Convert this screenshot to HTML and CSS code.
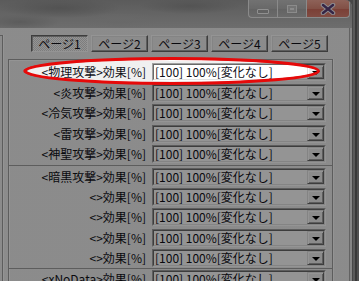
FILE: index.html
```html
<!DOCTYPE html>
<html lang="ja">
<head>
<meta charset="utf-8">
<link rel="stylesheet" href="styles.css">
</head>
<body>
<div class="window">
  <div class="titlebar">
    <div class="controls">
      <div class="cbtn min"><span class="g-min"></span></div>
      <div class="cbtn max"><span class="g-max"></span></div>
      <div class="cbtn close">
        <svg width="16" height="12" viewBox="0 0 16 12">
          <path d="M3 2 L13 10 M13 2 L3 10" stroke="#f4f0f8" stroke-width="4.5" stroke-linecap="round"/>
          <path d="M3 2 L13 10 M13 2 L3 10" stroke="#5a3f78" stroke-width="2.4" stroke-linecap="round"/>
        </svg>
      </div>
    </div>
  </div>
  <div class="client">
    <div class="leftpane"></div>
    <div class="main">
      <div class="tabs">
        <div class="tab pressed">ページ1</div>
        <div class="tab">ページ2</div>
        <div class="tab">ページ3</div>
        <div class="tab">ページ4</div>
        <div class="tab">ページ5</div>
      </div>
      <div class="group">
        <div class="section s1">
          <div class="row"><div class="label">&lt;物理攻撃&gt;効果[%]</div><div class="select"><div class="inner"><span class="val">[100] 100%[変化なし]</span><span class="drop"><i></i></span></div></div></div>
          <div class="row"><div class="label">&lt;炎攻撃&gt;効果[%]</div><div class="select"><div class="inner"><span class="val">[100] 100%[変化なし]</span><span class="drop"><i></i></span></div></div></div>
          <div class="row"><div class="label">&lt;冷気攻撃&gt;効果[%]</div><div class="select"><div class="inner"><span class="val">[100] 100%[変化なし]</span><span class="drop"><i></i></span></div></div></div>
          <div class="row"><div class="label">&lt;雷攻撃&gt;効果[%]</div><div class="select"><div class="inner"><span class="val">[100] 100%[変化なし]</span><span class="drop"><i></i></span></div></div></div>
          <div class="row"><div class="label">&lt;神聖攻撃&gt;効果[%]</div><div class="select"><div class="inner"><span class="val">[100] 100%[変化なし]</span><span class="drop"><i></i></span></div></div></div>
        </div>
        <div class="section s2">
          <div class="row"><div class="label">&lt;暗黒攻撃&gt;効果[%]</div><div class="select"><div class="inner"><span class="val">[100] 100%[変化なし]</span><span class="drop"><i></i></span></div></div></div>
          <div class="row"><div class="label">&lt;&gt;効果[%]</div><div class="select"><div class="inner"><span class="val">[100] 100%[変化なし]</span><span class="drop"><i></i></span></div></div></div>
          <div class="row"><div class="label">&lt;&gt;効果[%]</div><div class="select"><div class="inner"><span class="val">[100] 100%[変化なし]</span><span class="drop"><i></i></span></div></div></div>
          <div class="row"><div class="label">&lt;&gt;効果[%]</div><div class="select"><div class="inner"><span class="val">[100] 100%[変化なし]</span><span class="drop"><i></i></span></div></div></div>
          <div class="row"><div class="label">&lt;&gt;効果[%]</div><div class="select"><div class="inner"><span class="val">[100] 100%[変化なし]</span><span class="drop"><i></i></span></div></div></div>
        </div>
        <div class="section s3">
          <div class="row"><div class="label">&lt;xNoData&gt;効果[%]</div><div class="select"><div class="inner"><span class="val">[100] 100%[変化なし]</span><span class="drop"><i></i></span></div></div></div>
        </div>
      </div>
    </div>
  </div>
</div>
<div class="dim"></div>
<svg class="ring" width="359" height="281" viewBox="0 0 359 281">
  <ellipse cx="172" cy="71" rx="146.5" ry="12.5" fill="none" stroke="#e60a0a" stroke-width="3"/>
  <ellipse cx="171" cy="71" rx="147" ry="12" fill="none" stroke="#e60a0a" stroke-width="1.5"/>
</svg>
</body>
</html>
```
FILE: styles.css
```css
html, body {
  margin: 0;
  padding: 0;
}
body {
  position: relative;
  width: 359px;
  height: 281px;
  overflow: hidden;
  font-family: "Noto Sans CJK JP", "Noto Sans", sans-serif;
  font-size: 12px;
  color: #101018;
  background: linear-gradient(90deg, #7a7a7a 0 353px, #9a9a9a 353px 355px, #606060 355px 357px, #8a8a8a 357px);
}
.window {
  width: 352px;
  height: 281px;
  display: flex;
  flex-direction: column;
  background: #e4e4e4;
  border-top-right-radius: 7px;
  overflow: hidden;
}
.titlebar {
  height: 28px;
  flex: none;
  display: flex;
  justify-content: flex-end;
  align-items: flex-start;
  padding-right: 2px;
  box-sizing: border-box;
  background:
    radial-gradient(ellipse 60px 10px at 60px 8px, #8e8e8e, transparent),
    radial-gradient(ellipse 50px 8px at 190px 6px, #909090, transparent),
    radial-gradient(ellipse 40px 8px at 120px 20px, #b4b4b4, transparent),
    radial-gradient(ellipse 40px 8px at 20px 22px, #9e9e9e, transparent),
    linear-gradient(#9c9c9c, #b0b0b0 60%, #bcbcbc);
}
.controls {
  display: flex;
}
.cbtn {
  height: 18px;
  box-sizing: border-box;
  display: flex;
  align-items: center;
  justify-content: center;
  border: 1px solid #eeeeee;
  border-top: none;
  background: linear-gradient(#c4c4c4, #b4b4b4 50%, #aaaaaa 51%, #b8b8b8);
}
.min {
  width: 29px;
  border-right: none;
  border-bottom-left-radius: 4px;
}
.max {
  width: 29px;
  border-right: none;
}
.close {
  width: 44px;
  border-bottom-right-radius: 4px;
  background: linear-gradient(#f4a898, #e08a78 50%, #d26c5c 51%, #dc8272);
}
.g-min {
  width: 10px;
  height: 3px;
  margin-top: 5px;
  border: 1px solid #f8f8f8;
  border-radius: 1px;
  background: #a8a8a8;
}
.g-max {
  width: 8px;
  height: 6px;
  border: 1px solid #f0f0f0;
  box-shadow: inset 0 0 0 2px #c8c8c8, inset 0 0 0 3px #f0f0f0;
  background: #b0b0b0;
}
.client {
  flex: 1;
  display: flex;
  margin-right: 2px;
  background: #f0f0f0;
  border-right: 1px solid #a8a8a8;
}
.leftpane {
  width: 2px;
  margin-top: 7px;
  border-top: 1px solid #a0a0a0;
  border-right: 1px solid #a0a0a0;
  box-shadow: 1px 0 0 #ffffff;
}
.main {
  flex: 1;
  padding-left: 5px;
  display: flex;
  flex-direction: column;
}
.tabs {
  display: flex;
  gap: 3px;
  margin-top: 7px;
  padding-left: 23px;
}
.tab {
  width: 57px;
  height: 17px;
  box-sizing: border-box;
  display: flex;
  align-items: center;
  justify-content: center;
  border: 1px solid;
  border-color: #ffffff #696969 #696969 #ffffff;
  box-shadow: inset -1px -1px 0 #a0a0a0, inset 1px 1px 0 #e3e3e3;
  background: #f0f0f0;
  line-height: 15px;
}
.tab.pressed {
  border-color: #696969 #ffffff #ffffff #696969;
  box-shadow: inset 1px 1px 0 #a0a0a0;
  background: repeating-conic-gradient(#ffffff 0 25%, #d8d8d8 0 50%) 0 0 / 2px 2px;
}
.group {
  margin-top: 7px;
  width: 325px;
  flex: 1;
  box-sizing: border-box;
  border: 1px solid #a0a0a0;
  border-bottom: none;
  box-shadow: inset 1px 1px 0 #ffffff, 1px 0 0 #ffffff;
}
.section {
  display: flex;
  flex-direction: column;
}
.s1 {
  padding: 3px 0 1.6px;
  gap: 2.6px;
}
.s2 {
  border-top: 1px solid #a0a0a0;
  padding: 2px 0 1px;
  gap: 2.25px;
}
.s3 {
  border-top: 1px solid #a0a0a0;
  padding-top: 1px;
}
.row {
  display: flex;
  align-items: center;
  height: 18px;
  gap: 6px;
}
.label {
  width: 137px;
  text-align: right;
  line-height: 18px;
  white-space: nowrap;
}
.select {
  width: 174px;
  height: 18px;
  box-sizing: border-box;
  border: 1px solid;
  border-color: #a0a0a0 #ffffff #ffffff #a0a0a0;
  display: flex;
}
.inner {
  flex: 1;
  display: flex;
  align-items: stretch;
  border: 1px solid;
  border-color: #696969 #e3e3e3 #e3e3e3 #696969;
  background: #ffffff;
}
.val {
  flex: 1;
  display: flex;
  align-items: center;
  padding-left: 1px;
  line-height: 14px;
  white-space: nowrap;
}
.drop {
  width: 17px;
  flex: none;
  box-sizing: border-box;
  display: flex;
  align-items: center;
  justify-content: center;
  border: 1px solid;
  border-color: #e3e3e3 #696969 #696969 #e3e3e3;
  box-shadow: inset 1px 1px 0 #ffffff, inset -1px -1px 0 #a0a0a0;
  background: #f0f0f0;
}
.drop i {
  width: 0;
  height: 0;
  margin-top: 2px;
  border-left: 4px solid transparent;
  border-right: 4px solid transparent;
  border-top: 4px solid #000000;
}
.dim {
  position: absolute;
  inset: 0;
  background: radial-gradient(146px 12px at 172px 71px, rgba(0, 0, 0, 0) 98%, rgba(0, 0, 0, 0.42) 100%);
}
.ring {
  position: absolute;
  left: 0;
  top: 0;
}
```
